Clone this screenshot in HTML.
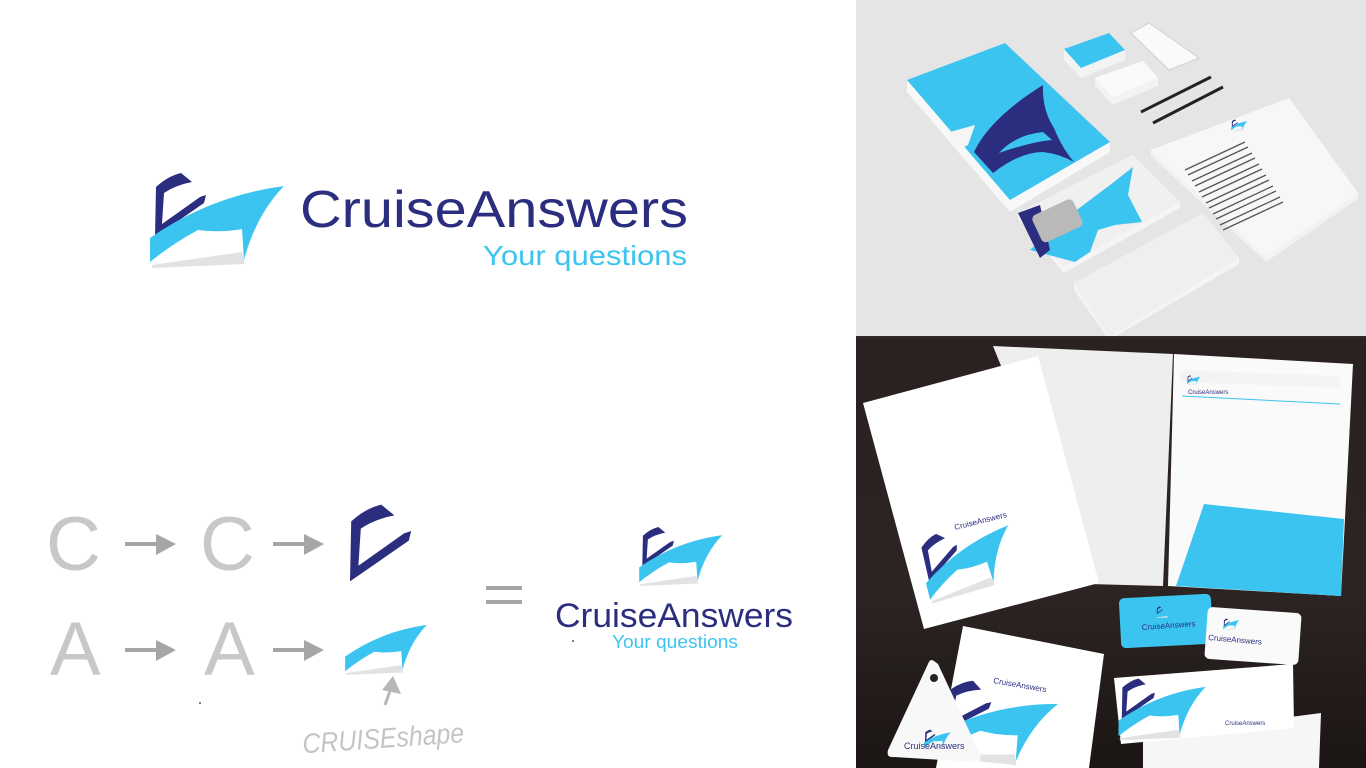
<!DOCTYPE html>
<html><head><meta charset="utf-8"><style>
html,body{margin:0;padding:0;width:1366px;height:768px;overflow:hidden;background:#fff}
svg{display:block}
</style></head><body>
<svg width="1366" height="768" viewBox="0 0 1366 768" xmlns="http://www.w3.org/2000/svg" font-family="Liberation Sans, sans-serif">
<defs>
  <g id="navy"><path d="M15,77 L16,27 Q28,16 41,13 L52,22 Q36,25 24,33 L22,64 L60,37 L66,35 L64,43 Z" fill="#2b2e7f"/></g>
  <g id="cyan">
    <path d="M12,105 L102,92 L105,104 L12,108 Z" fill="#e2e2e2"/>
    <path d="M10,102 L10,78 Q70,36 144,26 Q116,55 104,100 L102,69 Q80,73 58,70 Q32,84 10,102 Z" fill="#3cc4f1"/>
    <path d="M60,69 Q80,60 103,62 L102,67 Q80,71 60,69 Z" fill="#3cc4f1"/>
  </g>
  <g id="logo"><use href="#navy"/><use href="#cyan"/></g>
  <linearGradient id="dark" x1="0" y1="0" x2="0" y2="1"><stop offset="0" stop-color="#2a2220"/><stop offset="0.6" stop-color="#2b2422"/><stop offset="1" stop-color="#1b1514"/></linearGradient>
</defs>

<use href="#logo" transform="translate(140,160)"/>
<text x="300" y="227" font-size="52" fill="#2b2e7f" textLength="388" lengthAdjust="spacingAndGlyphs">CruiseAnswers</text>
<text x="483" y="265" font-size="28" fill="#3cc4f1" textLength="204" lengthAdjust="spacingAndGlyphs">Your questions</text>

<g fill="#c8c8c8" font-size="76">
  <text x="46" y="570">C</text><text x="200" y="570">C</text>
  <text x="50" y="675">A</text><text x="204" y="675">A</text>
</g>
<g fill="#a6a6a6" stroke="#a6a6a6">
  <line x1="125" y1="544" x2="160" y2="544" stroke-width="4"/><path d="M156,534 L176,544 L156,555 Z" stroke="none"/>
  <line x1="273" y1="544" x2="308" y2="544" stroke-width="4"/><path d="M304,534 L324,544 L304,555 Z" stroke="none"/>
  <line x1="125" y1="650" x2="160" y2="650" stroke-width="4"/><path d="M156,640 L176,650 L156,661 Z" stroke="none"/>
  <line x1="273" y1="650" x2="308" y2="650" stroke-width="4"/><path d="M304,640 L324,650 L304,661 Z" stroke="none"/>
  <line x1="385" y1="705" x2="391" y2="688" stroke="#b8b8b8" stroke-width="3"/><path d="M382,690 L393,676 L401,694 Z" fill="#b8b8b8" stroke="none"/>
  <rect x="486" y="586" width="36" height="4" stroke="none"/><rect x="486" y="600" width="36" height="4" stroke="none"/>
</g>
<use href="#navy" transform="translate(332,489) scale(1.2)"/>
<use href="#cyan" transform="translate(339,609) scale(0.61)"/>
<text x="302" y="748" font-size="28" fill="#c4c4c4" font-style="italic" textLength="162" lengthAdjust="spacingAndGlyphs" transform="rotate(-4 380 735)">CRUISEshape</text>
<circle cx="200" cy="703" r="1" fill="#555"/><circle cx="573" cy="641" r="1" fill="#555"/>

<use href="#logo" transform="translate(633,519) scale(0.62)"/>
<text x="555" y="627" font-size="34" fill="#2b2e7f" textLength="238" lengthAdjust="spacingAndGlyphs">CruiseAnswers</text>
<text x="612" y="648" font-size="18" fill="#3cc4f1" textLength="126" lengthAdjust="spacingAndGlyphs">Your questions</text>

<rect x="856" y="0" width="510" height="337" fill="#e5e5e6"/>
<polygon points="907,80 1010,200 1110,142 1110,152 1010,212 907,92" fill="#f8f8f8"/>
<polygon points="907,80 1005,43 1110,142 1010,200" fill="#3cc4f1"/>
<path d="M974,152 Q990,118 1043,85 Q1042,110 1054,128 Q1062,148 1074,162 Q1060,154 1043,152 Q1020,152 993,173 Z" fill="#2b2e7f"/>
<path d="M999,153 Q1015,135 1043,132 L1052,140 Q1030,142 999,153 Z" fill="#3cc4f1"/>
<polygon points="948,135 950,132 975,125 968,145 958,150" fill="#f5f5f5"/>
<polygon points="1018,213 1133,155 1180,202 1180,208 1064,273 1018,219" fill="#f5f5f5"/>
<polygon points="1018,213 1133,155 1180,202 1064,267" fill="#f0f0f0"/>
<polygon points="1030,250 1070,215 1110,185 1133,167 1128,195 1142,222 1115,225 1098,230 1090,252 1075,262" fill="#3cc4f1"/>
<polygon points="1018,213 1040,205 1050,250 1040,258" fill="#2b2e7f"/>
<rect x="1035" y="206" width="45" height="30" rx="5" fill="#b9b9b9" transform="rotate(-25 1057 221)"/>
<polygon points="1074,283 1203,213 1239,258 1239,264 1109,340 1074,290" fill="#f4f4f4"/>
<polygon points="1074,283 1203,213 1239,258 1109,337" fill="#efefef"/>
<polygon points="1151,150 1289,98 1358,193 1358,199 1266,262 1151,156" fill="#f2f2f2"/>
<polygon points="1151,150 1289,98 1358,193 1266,257" fill="#f7f7f7"/>
<g stroke="#555" stroke-width="1.3">
  <line x1="1185" y1="170" x2="1245" y2="142"/><line x1="1188" y1="175" x2="1248" y2="147"/>
  <line x1="1192" y1="181" x2="1252" y2="153"/><line x1="1195" y1="186" x2="1255" y2="158"/>
  <line x1="1199" y1="192" x2="1259" y2="164"/><line x1="1202" y1="197" x2="1262" y2="169"/>
  <line x1="1206" y1="203" x2="1266" y2="175"/><line x1="1209" y1="208" x2="1269" y2="180"/>
  <line x1="1213" y1="214" x2="1273" y2="186"/><line x1="1216" y1="219" x2="1276" y2="191"/>
  <line x1="1220" y1="225" x2="1280" y2="197"/><line x1="1223" y1="230" x2="1283" y2="202"/>
</g>
<g transform="translate(1230,118) scale(0.12)"><use href="#logo"/></g>
<polygon points="1064,49 1109,33 1125,50 1125,60 1081,78 1064,60" fill="#f3f3f3"/>
<polygon points="1064,49 1109,33 1125,50 1081,68" fill="#3cc4f1"/>
<polygon points="1095,78 1143,61 1158,78 1158,86 1113,105 1095,86" fill="#f3f3f3"/>
<polygon points="1095,78 1143,61 1158,78 1113,97" fill="#fafafa"/>
<polygon points="1131,33 1149,23 1199,58 1169,70" fill="#fafafa" stroke="#d0d0d0"/>
<line x1="1141" y1="112" x2="1211" y2="77" stroke="#222" stroke-width="3"/>
<line x1="1153" y1="123" x2="1223" y2="87" stroke="#222" stroke-width="3"/>

<rect x="856" y="337" width="510" height="431" fill="url(#dark)"/>
<rect x="856" y="336" width="510" height="2" fill="#2f2a28"/>
<polygon points="993,346 1173,354 1163,586 1089,584" fill="#eeeeee"/>
<polygon points="1174,354 1353,364 1341,596 1168,586" fill="#fafafa"/>
<polygon points="1180,370 1340,376 1340,388 1180,382" fill="#f4f4f4"/>
<line x1="1182" y1="396" x2="1340" y2="404" stroke="#3cc4f1" stroke-width="1"/>
<use href="#logo" transform="translate(1186,374) scale(0.1)"/>
<text x="1188" y="394" font-size="6" fill="#2b2e7f">CruiseAnswers</text>
<polygon points="1204,504 1344,519 1341,596 1176,586" fill="#3cc4f1"/>
<polygon points="863,403 1038,356 1099,583 924,629" fill="#ffffff"/>
<g transform="translate(906,532) rotate(-14) scale(0.7)"><use href="#logo"/></g>
<text x="955" y="530" font-size="8" fill="#2b2e7f" transform="rotate(-14 955 530)">CruiseAnswers</text>
<rect x="1120" y="596" width="92" height="50" rx="5" fill="#3cc4f1" transform="rotate(-3 1166 621)"/>
<use href="#logo" transform="translate(1155,605) scale(0.12)"/>
<text x="1142" y="630" font-size="8" fill="#2b2e7f" transform="rotate(-4 1142 630)">CruiseAnswers</text>
<rect x="1206" y="610" width="94" height="52" rx="5" fill="#fafafa" transform="rotate(4 1253 636)"/>
<use href="#logo" transform="translate(1222,617) scale(0.12)"/>
<text x="1208" y="640" font-size="8" fill="#2b2e7f" transform="rotate(5 1208 640)">CruiseAnswers</text>
<polygon points="963,626 1104,654 1089,768 936,768" fill="#ffffff"/>
<g transform="translate(940,665) rotate(8) scale(0.85)"><use href="#logo"/></g>
<text x="993" y="683" font-size="8" fill="#2b2e7f" transform="rotate(10 993 683)">CruiseAnswers</text>
<path d="M934,661 Q930,658 928,664 L888,750 Q886,758 894,757 L975,762 Q983,762 980,754 L938,664 Z" fill="#f8f8f8"/>
<circle cx="934" cy="678" r="4" fill="#222"/>
<use href="#logo" transform="translate(922,727) scale(0.2)"/>
<text x="904" y="749" font-size="9" fill="#2b2e7f">CruiseAnswers</text>
<polygon points="1143,736 1321,713 1319,768 1143,768" fill="#f6f6f6"/>
<polygon points="1114,678 1293,664 1294,728 1121,744" fill="#ffffff"/>
<g transform="translate(1112,670) scale(0.65)"><use href="#logo"/></g>
<text x="1225" y="725" font-size="6" fill="#2b2e7f">CruiseAnswers</text>
</svg>
</body></html>
